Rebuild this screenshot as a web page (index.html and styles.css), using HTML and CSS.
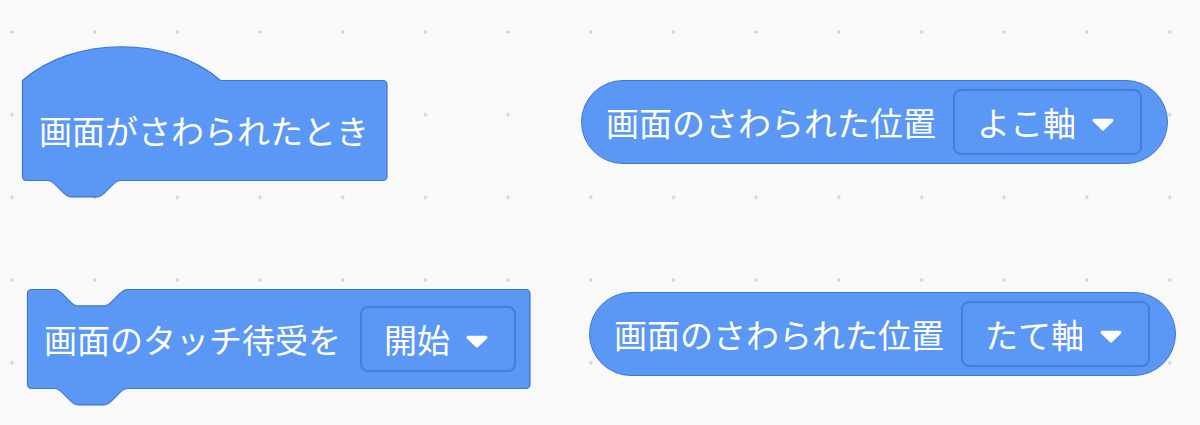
FILE: index.html
```html
<!DOCTYPE html>
<html lang="ja">
<head>
<meta charset="utf-8">
<title>画面ブロック</title>
<link rel="stylesheet" href="styles.css">
</head>
<body>
<div class="workspace">

  <!-- hat block: when the screen is touched -->
  <div class="block hat">
    <svg class="shape" width="366" height="153" viewBox="0 0 366 153">
      <path d="M0.5,35.5 c51.5,-45 146.5,-45 198,0 H361 a4,4 0 0 1 4,4 V131.5 a4,4 0 0 1 -4,4 H99
               c-4.1,0 -6.2,2.1 -8.2,4.1 l-8.2,8.2 c-2.1,2.1 -4.1,4.1 -8.2,4.1 h-24.7
               c-4.1,0 -6.2,-2.1 -8.2,-4.1 l-8.2,-8.2 c-2.1,-2.1 -4.1,-4.1 -8.2,-4.1
               H4.5 a4,4 0 0 1 -4,-4 Z"/>
    </svg>
    <div class="row">
      <span class="label">画面がさわられたとき</span>
    </div>
  </div>

  <!-- reporter: touched position, x axis -->
  <div class="block reporter r-top">
    <span class="label">画面のさわられた位置</span>
    <div class="dropdown">
      <span class="label">よこ軸</span>
      <svg class="arrow" width="22" height="13" viewBox="0 0 22 13">
        <path d="M2.2,0.8 H19.8 a1.6,1.6 0 0 1 1.2,2.7 L12.2,12 a1.7,1.7 0 0 1 -2.4,0 L1,3.5 A1.6,1.6 0 0 1 2.2,0.8 Z"/>
      </svg>
    </div>
  </div>

  <!-- stack block: start/stop waiting for touches -->
  <div class="block stack">
    <svg class="shape" width="504" height="117" viewBox="0 0 504 117">
      <path d="M0.5,4.5 a4,4 0 0 1 4,-4 H27
               c4.1,0 6.2,2.1 8.2,4.1 l8.2,8.2 c2.1,2.1 4.1,4.1 8.2,4.1 h24.7
               c4.1,0 6.2,-2.1 8.2,-4.1 l8.2,-8.2 c2.1,-2.1 4.1,-4.1 8.2,-4.1
               H499 a4,4 0 0 1 4,4 V95.5 a4,4 0 0 1 -4,4 H101
               c-4.1,0 -6.2,2.1 -8.2,4.1 l-8.2,8.2 c-2.1,2.1 -4.1,4.1 -8.2,4.1 h-24.7
               c-4.1,0 -6.2,-2.1 -8.2,-4.1 l-8.2,-8.2 c-2.1,-2.1 -4.1,-4.1 -8.2,-4.1
               H4.5 a4,4 0 0 1 -4,-4 Z"/>
    </svg>
    <div class="row">
      <span class="label">画面のタッチ待受を</span>
      <div class="dropdown">
        <span class="label">開始</span>
        <svg class="arrow" width="22" height="13" viewBox="0 0 22 13">
          <path d="M2.2,0.8 H19.8 a1.6,1.6 0 0 1 1.2,2.7 L12.2,12 a1.7,1.7 0 0 1 -2.4,0 L1,3.5 A1.6,1.6 0 0 1 2.2,0.8 Z"/>
        </svg>
      </div>
    </div>
  </div>

  <!-- reporter: touched position, y axis -->
  <div class="block reporter r-bottom">
    <span class="label">画面のさわられた位置</span>
    <div class="dropdown">
      <span class="label">たて軸</span>
      <svg class="arrow" width="22" height="13" viewBox="0 0 22 13">
        <path d="M2.2,0.8 H19.8 a1.6,1.6 0 0 1 1.2,2.7 L12.2,12 a1.7,1.7 0 0 1 -2.4,0 L1,3.5 A1.6,1.6 0 0 1 2.2,0.8 Z"/>
      </svg>
    </div>
  </div>

</div>
</body>
</html>
```
FILE: styles.css
```css
* {
  box-sizing: border-box;
}

html,
body {
  margin: 0;
  padding: 0;
}

body {
  font-family: "Noto Sans CJK JP", "Noto Sans", sans-serif;
  background: #f9f9f9;
}

/* editor canvas with its dotted grid */
.workspace {
  position: relative;
  width: 1200px;
  height: 425px;
  overflow: hidden;
  background-color: #f9f9f9;
  background-image: radial-gradient(circle at 2px 2px, #ccd2da 0, #ccd2da 1.3px, rgba(204, 210, 218, 0) 2px);
  background-size: 82.7px 82.7px;
  background-position: 10px 30px;
}

/* blocks sit at their own spot on the canvas */
.block {
  position: absolute;
  color: #ffffff;
}

.label {
  font-size: 33px;
  line-height: 1;
  white-space: nowrap;
}

.shape {
  position: absolute;
  left: 0;
  top: 0;
  overflow: visible;
}

.shape path {
  fill: #5b97f4;
  stroke: #3f76cf;
  stroke-width: 1.2;
}

.row {
  position: relative;
  display: flex;
  align-items: center;
  height: 100px;
}

/* hat block */
.hat {
  left: 22px;
  top: 45px;
  width: 366px;
  height: 153px;
}

.hat .row {
  margin-top: 35px;
  padding-left: 17px;
}

/* stack block */
.stack {
  left: 27px;
  top: 289px;
  width: 504px;
  height: 117px;
}

.stack .row {
  padding: 0 15px 0 17px;
  gap: 19px;
}

/* round reporters */
.reporter {
  display: flex;
  align-items: center;
  height: 84px;
  padding: 0 25px 0 24px;
  gap: 17px;
  background: #5b97f4;
  border: 1.3px solid #3f76cf;
  border-radius: 42px;
}

.r-top {
  left: 581px;
  top: 80px;
}

.r-bottom {
  left: 589px;
  top: 292px;
}

/* dropdown field */
.dropdown {
  display: flex;
  align-items: center;
  height: 66px;
  padding: 0 26px 0 22px;
  gap: 16px;
  border: 2px solid #477ed6;
  border-radius: 8px;
  background: #5b97f4;
}

.arrow {
  display: block;
  margin-top: 5px;
}

.arrow path {
  fill: #ffffff;
}
```
